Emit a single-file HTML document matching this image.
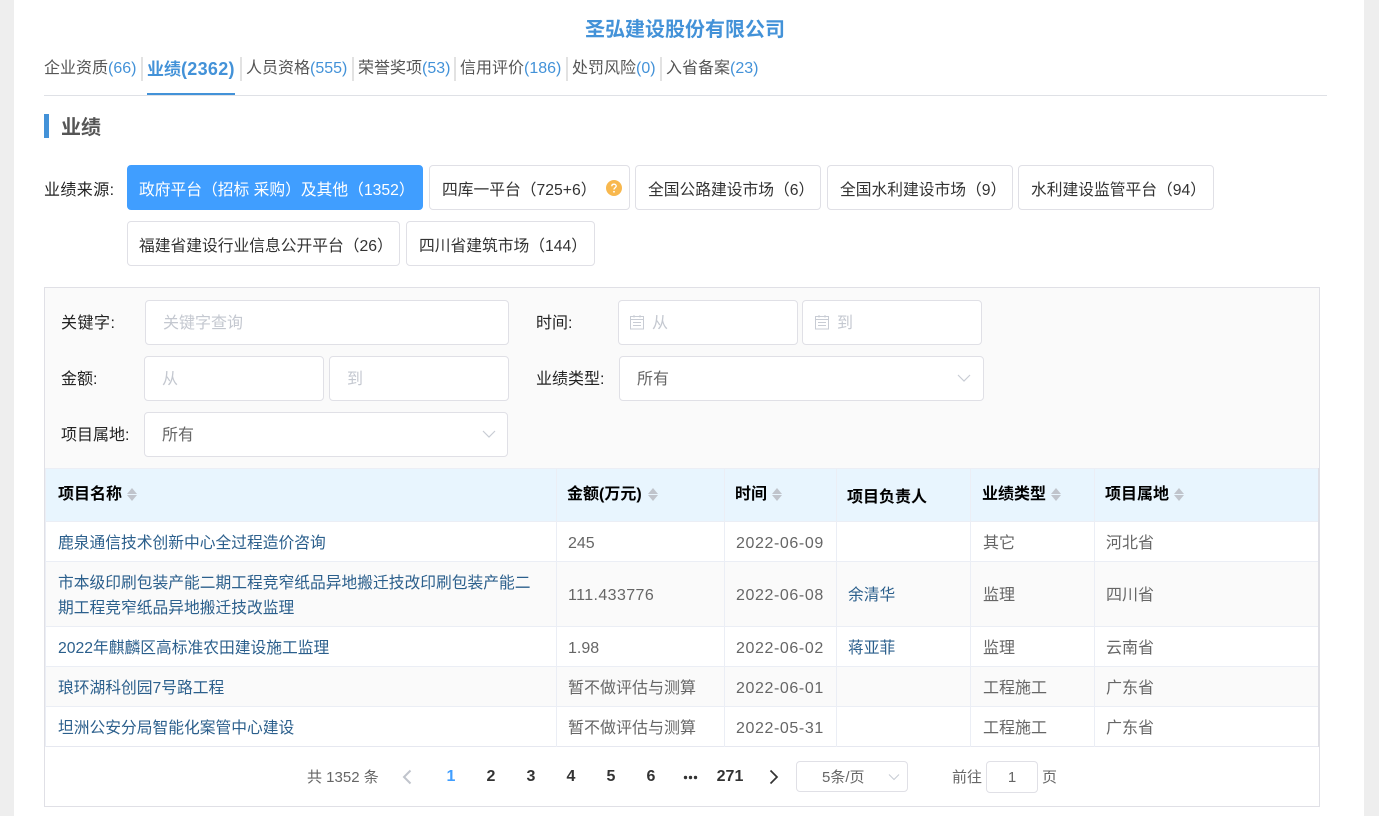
<!DOCTYPE html>
<html lang="zh-CN"><head><meta charset="utf-8"><title>圣弘建设股份有限公司</title>
<style>
*{box-sizing:border-box}
html,body{margin:0;padding:0;width:1379px;height:816px;overflow:hidden;background:#fff;font-family:"Liberation Sans","Noto Sans CJK SC",sans-serif}
.a{position:absolute}
.t{position:absolute;white-space:nowrap;line-height:20px;height:20px;font-size:16px;margin-top:2px}
.tab{color:#555}.tab span{color:#4392d8}
.div{position:absolute;top:57px;width:2px;height:24px;background:#e2e2e2}
.btn{position:absolute;height:45px;border:1px solid #e0e0e6;border-radius:4px;background:#fff;color:#333;font-size:15.75px;line-height:50px;padding-left:12px;white-space:nowrap}
.in{position:absolute;height:45px;border:1px solid #e0e0e6;border-radius:4px;background:#fff}
.lb{color:#222}.ph{color:#c4c8d0}.val{color:#666}
.th{font-weight:700;color:#000}
.lk{color:#2b5f8c;font-size:15.75px}.c{color:#666}
.d{letter-spacing:.6px}
.v{position:absolute;width:1px;background:#ebeef5}
.h{position:absolute;height:1px;background:#ebeef5;left:45px;width:1273px}
.up{position:absolute;width:0;height:0;border-left:5.5px solid transparent;border-right:5.5px solid transparent;border-bottom:6px solid #c0c4cc}
.dn{position:absolute;width:0;height:0;border-left:5.5px solid transparent;border-right:5.5px solid transparent;border-top:6px solid #c0c4cc}
.pg{position:absolute;top:767px;width:40px;text-align:center;font-size:16px;font-weight:700;color:#333;line-height:20px}
.s15{font-size:15px;margin-top:1px}
</style></head><body>
<div class="a" style="left:0;top:0;width:14px;height:816px;background:#eee"></div>
<div class="a" style="left:1364px;top:0;width:15px;height:816px;background:#eee"></div>

<div class="t" style="left:14px;width:1342px;text-align:center;top:19px;font-size:20px;font-weight:700;color:#4392d8;margin-top:1px">圣弘建设股份有限公司</div>

<div class="t tab" style="left:44px;top:57px">企业资质<span>(66)</span></div>
<div class="div" style="left:141px"></div>
<div class="t" style="left:147px;top:57px;font-weight:700;color:#4392d8;font-size:17px">业绩<span style="font-size:18px;letter-spacing:.3px">(2362)</span></div>
<div class="div" style="left:240px"></div>
<div class="t tab" style="left:246px;top:57px">人员资格<span>(555)</span></div>
<div class="div" style="left:352px"></div>
<div class="t tab" style="left:358px;top:57px">荣誉奖项<span>(53)</span></div>
<div class="div" style="left:454px"></div>
<div class="t tab" style="left:460px;top:57px">信用评价<span>(186)</span></div>
<div class="div" style="left:566px"></div>
<div class="t tab" style="left:572px;top:57px">处罚风险<span>(0)</span></div>
<div class="div" style="left:660px"></div>
<div class="t tab" style="left:666px;top:57px">入省备案<span>(23)</span></div>
<div class="a" style="left:147px;top:93px;width:88px;height:2px;background:#4392d8"></div>
<div class="a" style="left:44px;top:95px;width:1283px;height:1px;background:#dfe1e6"></div>

<div class="a" style="left:44px;top:114px;width:5px;height:24px;background:#4392d8"></div>
<div class="t" style="left:61px;top:116px;font-size:20px;font-weight:700;color:#555">业绩</div>

<div class="t lb" style="left:44px;top:179px;letter-spacing:.4px">业绩来源:</div>
<div class="btn" style="left:127px;top:165px;width:296px;background:#409eff;border-color:#409eff;color:#fff;padding-left:11px">政府平台（招标 采购）及其他（1352）</div>
<div class="btn" style="left:429px;top:165px;width:201px">四库一平台（725+6）</div>
<svg class="a" style="left:606px;top:180px" width="16" height="16" viewBox="0 0 16 16"><circle cx="8" cy="8" r="8" fill="#f8b84e"/><path d="M5.8 6.2C5.8 4.9 6.8 4.2 8 4.2s2.2.8 2.2 1.9c0 1.6-2.2 1.7-2.2 3.4" fill="none" stroke="#fff" stroke-width="1.4"/><circle cx="8" cy="11.8" r=".9" fill="#fff"/></svg>
<div class="btn" style="left:635px;top:165px;width:186px">全国公路建设市场（6）</div>
<div class="btn" style="left:827px;top:165px;width:186px">全国水利建设市场（9）</div>
<div class="btn" style="left:1018px;top:165px;width:196px">水利建设监管平台（94）</div>
<div class="btn" style="left:127px;top:221px;width:273px;padding-left:11px">福建省建设行业信息公开平台（26）</div>
<div class="btn" style="left:406px;top:221px;width:189px">四川省建筑市场（144）</div>

<!-- panel -->
<div class="a" style="left:44px;top:287px;width:1276px;height:520px;border:1px solid #e0e0e6;background:#fff"></div>
<div class="a" style="left:45px;top:288px;width:1274px;height:181px;background:#fafafa"></div>

<div class="t lb" style="left:61px;top:312px;letter-spacing:.5px">关键字:</div>
<div class="in" style="left:145px;top:300px;width:364px"></div>
<div class="t ph" style="left:163px;top:312px">关键字查询</div>

<div class="t lb" style="left:536px;top:312px">时间:</div>
<div class="in" style="left:618px;top:300px;width:180px"></div>
<svg class="a" style="left:630px;top:315px" width="15" height="15" viewBox="0 0 15 15" fill="none" stroke="#c8ccd4"><rect x=".5" y="1.5" width="13" height="12.5"/><path d="M.5 4.5h13M3 7.5h8M3 10.5h8M4 0v2.5M10 0v2.5"/></svg>
<div class="t ph" style="left:652px;top:312px">从</div>
<div class="in" style="left:802px;top:300px;width:180px"></div>
<svg class="a" style="left:815px;top:315px" width="15" height="15" viewBox="0 0 15 15" fill="none" stroke="#c8ccd4"><rect x=".5" y="1.5" width="13" height="12.5"/><path d="M.5 4.5h13M3 7.5h8M3 10.5h8M4 0v2.5M10 0v2.5"/></svg>
<div class="t ph" style="left:837px;top:312px">到</div>

<div class="t lb" style="left:61px;top:368px">金额:</div>
<div class="in" style="left:144px;top:356px;width:180px"></div>
<div class="t ph" style="left:162px;top:368px">从</div>
<div class="in" style="left:329px;top:356px;width:180px"></div>
<div class="t ph" style="left:347px;top:368px">到</div>

<div class="t lb" style="left:536px;top:368px">业绩类型:</div>
<div class="in" style="left:619px;top:356px;width:365px"></div>
<div class="t val" style="left:637px;top:368px">所有</div>
<svg class="a" style="left:957px;top:373px" width="14" height="10" viewBox="0 0 14 10" fill="none" stroke="#c8ccd4" stroke-width="1.2"><path d="M1 2l6 6 6-6"/></svg>

<div class="t lb" style="left:61px;top:424px">项目属地:</div>
<div class="in" style="left:144px;top:412px;width:364px"></div>
<div class="t val" style="left:162px;top:424px">所有</div>
<svg class="a" style="left:482px;top:429px" width="14" height="10" viewBox="0 0 14 10" fill="none" stroke="#c8ccd4" stroke-width="1.2"><path d="M1 2l6 6 6-6"/></svg>

<!-- table -->
<div class="a" style="left:45px;top:468px;width:1273px;height:54px;background:#e8f5fe;border-top:1px solid #ebeef5"></div>
<div class="a" style="left:45px;top:562px;width:1273px;height:64px;background:#fafafa"></div>
<div class="a" style="left:45px;top:667px;width:1273px;height:39px;background:#fafafa"></div>
<div class="h" style="top:521px"></div><div class="h" style="top:561px"></div><div class="h" style="top:626px"></div><div class="h" style="top:666px"></div><div class="h" style="top:706px"></div>
<div class="h" style="top:746px;background:#e6e8f0"></div>
<div class="v" style="left:45px;top:468px;height:279px"></div>
<div class="v" style="left:556px;top:468px;height:279px"></div>
<div class="v" style="left:724px;top:468px;height:279px"></div>
<div class="v" style="left:836px;top:468px;height:279px"></div>
<div class="v" style="left:970px;top:468px;height:279px"></div>
<div class="v" style="left:1094px;top:468px;height:279px"></div>
<div class="v" style="left:1318px;top:468px;height:279px;background:#e0e0e6"></div>

<div class="t th" style="left:58px;top:483px">项目名称</div>
<div class="up" style="left:127px;top:488px"></div><div class="dn" style="left:127px;top:495px"></div>
<div class="t th" style="left:567px;top:483px">金额(万元)</div>
<div class="up" style="left:648px;top:488px"></div><div class="dn" style="left:648px;top:495px"></div>
<div class="t th" style="left:735px;top:483px">时间</div>
<div class="up" style="left:772px;top:488px"></div><div class="dn" style="left:772px;top:495px"></div>
<div class="t th" style="left:847px;top:486px">项目负责人</div>
<div class="t th" style="left:982px;top:483px">业绩类型</div>
<div class="up" style="left:1051px;top:488px"></div><div class="dn" style="left:1051px;top:495px"></div>
<div class="t th" style="left:1105px;top:483px">项目属地</div>
<div class="up" style="left:1174px;top:488px"></div><div class="dn" style="left:1174px;top:495px"></div>

<div class="t lk" style="left:58px;top:532px">鹿泉通信技术创新中心全过程造价咨询</div>
<div class="t c" style="left:568px;top:532px">245</div>
<div class="t c d" style="left:736px;top:532px">2022-06-09</div>
<div class="t c" style="left:983px;top:532px">其它</div>
<div class="t c" style="left:1106px;top:532px">河北省</div>

<div class="t lk" style="left:58px;top:572px">市本级印刷包装产能二期工程竞窄纸品异地搬迁技改印刷包装产能二</div>
<div class="t lk" style="left:58px;top:597px">期工程竞窄纸品异地搬迁技改监理</div>
<div class="t c" style="left:568px;top:584px;letter-spacing:.4px">111.433776</div>
<div class="t c d" style="left:736px;top:584px">2022-06-08</div>
<div class="t lk" style="left:848px;top:584px">余清华</div>
<div class="t c" style="left:983px;top:584px">监理</div>
<div class="t c" style="left:1106px;top:584px">四川省</div>

<div class="t lk" style="left:58px;top:637px">2022年麒麟区高标准农田建设施工监理</div>
<div class="t c" style="left:568px;top:637px">1.98</div>
<div class="t c d" style="left:736px;top:637px">2022-06-02</div>
<div class="t lk" style="left:848px;top:637px">蒋亚菲</div>
<div class="t c" style="left:983px;top:637px">监理</div>
<div class="t c" style="left:1106px;top:637px">云南省</div>

<div class="t lk" style="left:58px;top:677px">琅环湖科创园7号路工程</div>
<div class="t c" style="left:568px;top:677px">暂不做评估与测算</div>
<div class="t c d" style="left:736px;top:677px">2022-06-01</div>
<div class="t c" style="left:983px;top:677px">工程施工</div>
<div class="t c" style="left:1106px;top:677px">广东省</div>

<div class="t lk" style="left:58px;top:717px">坦洲公安分局智能化案管中心建设</div>
<div class="t c" style="left:568px;top:717px">暂不做评估与测算</div>
<div class="t c d" style="left:736px;top:717px">2022-05-31</div>
<div class="t c" style="left:983px;top:717px">工程施工</div>
<div class="t c" style="left:1106px;top:717px">广东省</div>

<!-- pagination -->
<div class="t c s15" style="left:307px;top:767px">共 1352 条</div>
<svg class="a" style="left:401px;top:769px" width="12" height="16" viewBox="0 0 12 16" fill="none" stroke="#c0c4cc" stroke-width="2"><path d="M9.5 1.5L3 8l6.5 6.5"/></svg>
<div class="pg" style="left:431px;color:#409eff">1</div>
<div class="pg" style="left:471px">2</div>
<div class="pg" style="left:511px">3</div>
<div class="pg" style="left:551px">4</div>
<div class="pg" style="left:591px">5</div>
<div class="pg" style="left:631px">6</div>
<svg class="a" style="left:683px;top:775px" width="15" height="5" viewBox="0 0 15 5" fill="#333"><circle cx="2.5" cy="2.5" r="1.7"/><circle cx="7.5" cy="2.5" r="1.7"/><circle cx="12.5" cy="2.5" r="1.7"/></svg>
<div class="pg" style="left:710px">271</div>
<svg class="a" style="left:768px;top:769px" width="12" height="16" viewBox="0 0 12 16" fill="none" stroke="#333" stroke-width="1.7"><path d="M2.5 1.5L9 8l-6.5 6.5"/></svg>

<div class="in" style="left:796px;top:761px;width:112px;height:31px"></div>
<div class="t val s15" style="left:822px;top:767px">5条/页</div>
<svg class="a" style="left:888px;top:773px" width="12" height="8" viewBox="0 0 12 8" fill="none" stroke="#c8ccd4" stroke-width="1.1"><path d="M1 1.5l5 5 5-5"/></svg>
<div class="t val s15" style="left:952px;top:767px">前往</div>
<div class="in" style="left:986px;top:761px;width:52px;height:32px"></div>
<div class="t val s15" style="left:986px;width:52px;text-align:center;top:767px">1</div>
<div class="t val s15" style="left:1042px;top:767px">页</div>
</body></html>
